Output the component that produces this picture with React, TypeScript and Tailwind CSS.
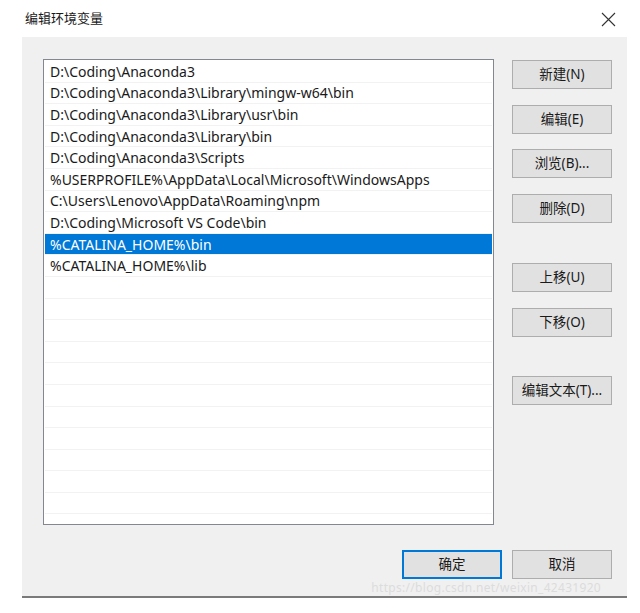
import React from 'react';

const paths = [
  'D:\\Coding\\Anaconda3',
  'D:\\Coding\\Anaconda3\\Library\\mingw-w64\\bin',
  'D:\\Coding\\Anaconda3\\Library\\usr\\bin',
  'D:\\Coding\\Anaconda3\\Library\\bin',
  'D:\\Coding\\Anaconda3\\Scripts',
  '%USERPROFILE%\\AppData\\Local\\Microsoft\\WindowsApps',
  'C:\\Users\\Lenovo\\AppData\\Roaming\\npm',
  'D:\\Coding\\Microsoft VS Code\\bin',
  '%CATALINA_HOME%\\bin',
  '%CATALINA_HOME%\\lib',
];

const SELECTED = 8;
const rows = [...paths, ...Array(14).fill('')];

const Btn: React.FC<{ label: string; primary?: boolean }> = ({ label, primary }) => (
  <button
    className={
      'w-[100px] h-[29px] bg-[#e1e1e1] text-[13.5px] text-[#1a1a1a] flex items-center justify-center ' +
      (primary ? 'border-2 border-[#0078d7]' : 'border border-[#adadad]')
    }
  >
    {label}
  </button>
);

const App: React.FC = () => {
  return (
    <div
      className="w-[640px] h-[613px] bg-white overflow-hidden"
      style={{ fontFamily: '"Noto Sans", "Noto Sans CJK SC", sans-serif' }}
    >
      <div className="h-[37px] flex items-center justify-between pl-[25px] pr-[24px]">
        <span className="text-[13px] text-[#1a1a1a]">编辑环境变量</span>
        <svg width="15" height="15" viewBox="0 0 15 15" className="mt-[2px]">
          <path d="M1 1 L14 14 M14 1 L1 14" stroke="#333" strokeWidth="1.1" fill="none" />
        </svg>
      </div>

      <div className="relative ml-[22px] w-[605px] h-[561px] bg-[#f0f0f0] border-b-2 border-[#7a7a7a] pt-[22px] pl-[21px]">
        <div className="flex gap-[18px]">
          <div className="w-[451px] h-[466px] bg-white border border-[#828790] pt-[1px] px-[1px] overflow-hidden">
            {rows.map((p, i) => (
              <div
                key={i}
                className={
                  'h-[21.6px] flex items-center pl-[5px] text-[14px] whitespace-nowrap border-b border-[#f2f2f2] ' +
                  (i === SELECTED ? 'bg-[#0078d7] text-white' : 'text-[#1a1a1a]')
                }
              >
                {p}
              </div>
            ))}
          </div>

          <div className="flex flex-col pt-[1px]">
            <div className="flex flex-col gap-[15.5px]">
              <Btn label="新建(N)" />
              <Btn label="编辑(E)" />
              <Btn label="浏览(B)..." />
              <Btn label="删除(D)" />
            </div>
            <div className="flex flex-col gap-[16px] mt-[40px]">
              <Btn label="上移(U)" />
              <Btn label="下移(O)" />
            </div>
            <div className="mt-[39px]">
              <Btn label="编辑文本(T)..." />
            </div>
          </div>
        </div>

        <div className="flex justify-end gap-[10px] mt-[25px] pr-[15px]">
          <Btn label="确定" primary />
          <Btn label="取消" />
        </div>

        <span className="absolute right-[26px] bottom-[1px] text-[12px] leading-[14px] text-[#dcdcdc] tracking-wide">
          https://blog.csdn.net/weixin_42431920
        </span>
      </div>
    </div>
  );
};

export default App;
